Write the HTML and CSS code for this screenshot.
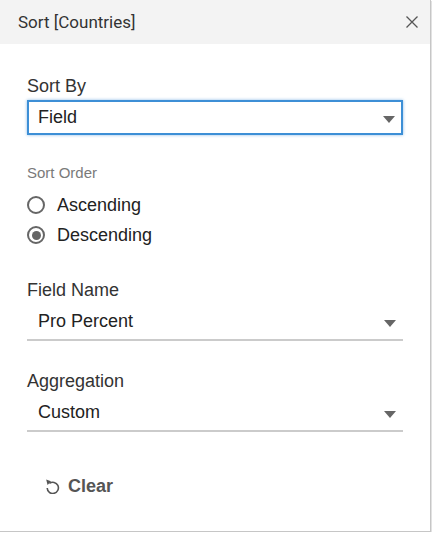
FILE: index.html
```html
<!DOCTYPE html>
<html>
<head>
<meta charset="utf-8">
<link rel="stylesheet" href="styles.css">
</head>
<body>
<div class="panel">
  <div class="header">
    <span class="title">Sort [Countries]</span>
    <svg class="close" width="12" height="12" viewBox="0 0 12 12"><path d="M0.5 0.5L11.5 11.5M11.5 0.5L0.5 11.5" stroke="#555" stroke-width="1.3" fill="none"/></svg>
  </div>
  <div class="content">
    <div class="field">
      <div class="label">Sort By</div>
      <div class="select boxed"><span>Field</span><span class="arrow"></span></div>
    </div>
    <div class="group">
      <div class="small-label">Sort Order</div>
      <div class="radio"><span class="circle"></span><span>Ascending</span></div>
      <div class="radio"><span class="circle checked"></span><span>Descending</span></div>
    </div>
    <div class="field">
      <div class="label">Field Name</div>
      <div class="select underlined"><span>Pro Percent</span><span class="arrow"></span></div>
    </div>
    <div class="field">
      <div class="label">Aggregation</div>
      <div class="select underlined"><span>Custom</span><span class="arrow"></span></div>
    </div>
    <div class="clear">
      <svg width="15" height="16" viewBox="0 0 15 16"><path d="M4.4 5.4A5.6 5.6 0 1 1 2.2 10" stroke="#555" stroke-width="1.6" fill="none"/><path d="M1.2 1.6L6 3.2L2.6 7Z" fill="#555"/></svg>
      <span>Clear</span>
    </div>
  </div>
</div>
</body>
</html>
```
FILE: styles.css
```css
html, body {
  margin: 0;
  padding: 0;
  background: #fff;
}
body {
  font-family: "Liberation Sans", Arial, sans-serif;
  color: #333;
}
.panel {
  width: 430px;
  height: 531px;
  border-right: 1px solid #c6c6c6;
  border-bottom: 1px solid #c6c6c6;
  box-shadow: 1px 1px 0 #e2e2e2;
  background: #fff;
}
.header {
  height: 44px;
  background: #f3f3f3;
  display: flex;
  align-items: center;
  justify-content: space-between;
  padding: 0 12px 0 18px;
}
.title {
  font-family: Roboto, "Liberation Sans", sans-serif;
  font-size: 17px;
  color: #333;
}
.close {
  display: block;
}
.content {
  padding: 32px 27px 0 27px;
  display: flex;
  flex-direction: column;
}
.label {
  font-size: 18px;
  line-height: 20px;
  color: #333;
  margin-bottom: 4px;
}
.select {
  display: flex;
  align-items: center;
  justify-content: space-between;
  font-size: 18px;
  color: #222;
  box-sizing: border-box;
}
.select.boxed {
  height: 35px;
  border: 2px solid #3d8fd6;
  box-shadow: 0 0 3px rgba(61, 143, 214, 0.6);
  padding: 0 6px 0 9px;
}
.select.underlined {
  height: 37px;
  border-bottom: 2px solid #cbcbcb;
  padding: 0 7px 0 11px;
}
.arrow {
  width: 0;
  height: 0;
  border-left: 6px solid transparent;
  border-right: 6px solid transparent;
  border-top: 7px solid #666;
  margin-top: 3px;
}
.group {
  margin-top: 29px;
  margin-bottom: 30px;
}
.small-label {
  font-size: 15px;
  color: #7a7a7a;
  line-height: 18px;
  margin-bottom: 8px;
}
.radio {
  display: flex;
  align-items: center;
  gap: 12px;
  font-size: 18px;
  color: #222;
  height: 30px;
}
.circle {
  width: 18px;
  height: 18px;
  border: 2px solid #666;
  border-radius: 50%;
  box-sizing: border-box;
  display: flex;
  align-items: center;
  justify-content: center;
}
.circle.checked::after {
  content: "";
  width: 9px;
  height: 9px;
  border-radius: 50%;
  background: #666;
}
.field + .field {
  margin-top: 30px;
}
.clear {
  margin-top: 44px;
  margin-left: 18px;
  display: flex;
  align-items: center;
  gap: 8px;
  font-size: 18px;
  line-height: 20px;
  font-weight: bold;
  color: #555;
}
.clear svg {
  display: block;
}
```
